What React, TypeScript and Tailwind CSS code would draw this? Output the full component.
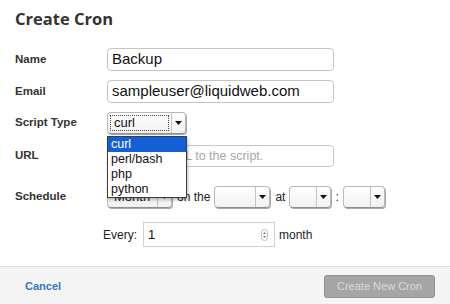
const scriptTypes = ['curl', 'perl/bash', 'php', 'python'];

function Arrow() {
  return (
    <svg width="7" height="4" viewBox="0 0 7 4">
      <path d="M0 0h7L3.5 4z" fill="#111" />
    </svg>
  );
}

function Select({ w, value, focus }: { w: string; value?: string; focus?: boolean }) {
  return (
    <div
      className={`${w} h-[22px] flex rounded-[4px] border border-[#b9b9b9] border-b-[#8e8e8e] bg-gradient-to-b from-white to-[#f1f1f1] shadow-[1px_1px_0_#a8a8a8]`}
    >
      <div className="flex-1 flex items-center px-[2px] min-w-0">
        {focus ? (
          <div className="w-full h-[16px] border border-dotted border-[#444] flex items-center pl-[3px] text-[13px] text-[#111]">
            {value}
          </div>
        ) : (
          <span className="pl-[4px] text-[13px] text-[#222]">{value}</span>
        )}
      </div>
      <div className="w-[14px] border-l border-[#c4c4c4] flex items-center justify-center">
        <Arrow />
      </div>
    </div>
  );
}

function Label({ children }: { children: React.ReactNode }) {
  return <div className="w-[92px] shrink-0 text-[11.5px] font-bold text-[#333]">{children}</div>;
}

export default function App() {
  return (
    <div
      className="relative w-[450px] h-[304px] bg-white flex flex-col overflow-hidden"
      style={{ fontFamily: '"Liberation Sans", Arial, sans-serif' }}
    >
      <h2
        className="px-[15px] pt-[8px] leading-[22px] text-[16.5px] font-bold text-[#333]"
        style={{ fontFamily: '"Open Sans", sans-serif' }}
      >
        Create Cron
      </h2>

      <div className="pl-[15px] mt-[18px] flex flex-col">
        <div className="flex items-center">
          <Label>Name</Label>
          <div className="w-[227px] h-[23px] flex items-center pl-[4px] rounded-[4px] border border-[#c4c4c4] text-[15px] text-[#111]">
            Backup
          </div>
        </div>

        <div className="flex items-center mt-[9px]">
          <Label>Email</Label>
          <div className="w-[227px] h-[23px] flex items-center pl-[4px] rounded-[4px] border border-[#c4c4c4] text-[15px] text-[#111]">
            sampleuser@liquidweb.com
          </div>
        </div>

        <div className="flex items-center mt-[9px]">
          <Label>Script Type</Label>
          <Select w="w-[79px]" value="curl" focus />
        </div>

        <div className="flex items-center mt-[11px]">
          <Label>URL</Label>
          <div className="w-[227px] h-[22px] flex items-center pl-[5px] rounded-[4px] border border-[#c8c8c8] text-[12.5px] text-[#a8a8a8]">
            Enter the URL to the script.
          </div>
        </div>

        <div className="flex items-center mt-[19px] text-[12px] text-[#222]">
          <Label>Schedule</Label>
          <Select w="w-[65px]" value="Month" />
          <span className="ml-[5px] mr-[4px]">on the</span>
          <Select w="w-[56px]" />
          <span className="ml-[5px] mr-[4px]">at</span>
          <Select w="w-[42px]" />
          <span className="mx-[4px]">:</span>
          <Select w="w-[42px]" />
        </div>

        <div className="flex items-center mt-[14px] text-[12px] text-[#222]">
          <div className="w-[88px] shrink-0" />
          <span className="mr-[6px]">Every:</span>
          <div className="w-[132px] h-[25px] flex items-center justify-between pl-[4px] pr-[6px] border border-[#d0d0d0] text-[13px] text-[#111]">
            <span>1</span>
            <svg width="7" height="12" viewBox="0 0 7 12">
              <rect x="0.5" y="0.5" width="6" height="11" rx="3" fill="none" stroke="#bbb" />
              <path d="M2 5h3L3.5 3z M2 7h3L3.5 9z" fill="#777" />
            </svg>
          </div>
          <span className="ml-[4px]">month</span>
        </div>
      </div>

      <div className="mt-auto h-[38px] border-t border-[#dedede] bg-[#f4f4f4] flex items-center justify-between pl-[25px] pr-[15px] pt-[2px]">
        <span className="text-[11px] font-bold text-[#2f78d1]">Cancel</span>
        <button className="w-[111px] h-[23px] rounded-[3px] border border-[#8f8f8f] bg-[#a5a5a5] text-[11px] text-[#dadada]">
          Create New Cron
        </button>
      </div>

      <div className="absolute left-[107px] top-[136px] w-[80px] border border-[#3c3c3c] bg-white shadow-[1px_2px_3px_rgba(0,0,0,0.25)]">
        {scriptTypes.map((t, i) => (
          <div
            key={t}
            className={`h-[15px] leading-[15px] pl-[3px] text-[12.5px] ${i === 0 ? 'bg-[#155fd6] text-white' : 'text-[#111]'}`}
          >
            {t}
          </div>
        ))}
      </div>
    </div>
  );
}
